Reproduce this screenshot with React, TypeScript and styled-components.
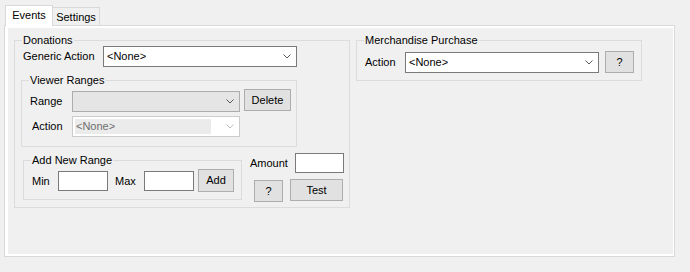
import React from "react";
import styled, { createGlobalStyle } from "styled-components";

const Global = createGlobalStyle`
  html, body { margin: 0; padding: 0; background: #f0f0f0; width: 690px; height: 272px; overflow: hidden; }
  body { font-family: "Liberation Sans", Arial, sans-serif; font-size: 11px; color: #000; }
  * { box-sizing: border-box; }
`;

const Root = styled.div`
  padding: 5px 0 0 4px;
`;

const TabControl = styled.div`
  width: 671px;
  display: flex;
  flex-direction: column;
`;

const TabStrip = styled.div`
  display: flex;
  align-items: flex-end;
  height: 20px;
  padding-left: 1px;
  position: relative;
  z-index: 1;
`;

const Tab = styled.div<{ $active?: boolean }>`
  width: 48px;
  height: ${(p) => (p.$active ? 21 : 18)}px;
  margin-bottom: ${(p) => (p.$active ? -1 : 0)}px;
  margin-left: ${(p) => (p.$active ? 0 : -1)}px;
  border: 1px solid #d9d9d9;
  border-bottom: none;
  background: ${(p) => (p.$active ? "#ffffff" : "#f0f0f0")};
  padding-top: 3px;
  text-align: center;
  line-height: 13px;
  position: relative;
  z-index: ${(p) => (p.$active ? 2 : 1)};
`;

const TabPage = styled.div`
  height: 232px;
  border: 1px solid #d9d9d9;
  background: #ffffff;
  padding: 2px 1px 2px 3px;
`;

const PageBody = styled.div`
  height: 100%;
  background: #f0f0f0;
  display: flex;
  align-items: flex-start;
  gap: 6px;
  padding: 12px 0 0 6px;
`;

const Group = styled.div<{ $w: number; $h: number; $mt?: number; $ml?: number }>`
  position: relative;
  flex-shrink: 0;
  display: flex;
  flex-direction: column;
  width: ${(p) => p.$w}px;
  height: ${(p) => p.$h}px;
  margin-top: ${(p) => p.$mt ?? 0}px;
  margin-left: ${(p) => p.$ml ?? 0}px;
  border: 1px solid #dcdcdc;
`;

const GroupTitle = styled.span`
  position: absolute;
  top: -7px;
  left: 7px;
  padding: 0 1px;
  background: #f0f0f0;
  line-height: 13px;
  white-space: nowrap;
`;

const FieldRow = styled.div<{ $mt?: number; $pl?: number; $center?: boolean }>`
  display: flex;
  align-items: ${(p) => (p.$center ? "center" : "flex-start")};
  margin-top: ${(p) => p.$mt ?? 0}px;
  padding-left: ${(p) => p.$pl ?? 0}px;
`;

const BottomRow = styled.div`
  display: flex;
  align-items: flex-start;
`;

const Column = styled.div<{ $mt: number; $ml: number }>`
  display: flex;
  flex-direction: column;
  margin-top: ${(p) => p.$mt}px;
  margin-left: ${(p) => p.$ml}px;
`;

const Label = styled.span<{ $w: number; $h?: number; $mt?: number; $ml?: number }>`
  flex-shrink: 0;
  width: ${(p) => p.$w}px;
  height: ${(p) => p.$h ?? 21}px;
  line-height: ${(p) => p.$h ?? 21}px;
  margin-top: ${(p) => p.$mt ?? 0}px;
  margin-left: ${(p) => p.$ml ?? 0}px;
  white-space: nowrap;
`;

type ComboKind = "normal" | "list" | "disabled";

const comboBorder: Record<ComboKind, string> = {
  normal: "#7a7a7a",
  list: "#adadad",
  disabled: "#cccccc",
};
const comboBg: Record<ComboKind, string> = {
  normal: "#ffffff",
  list: "#e5e5e5",
  disabled: "#ffffff",
};

const ComboBox = styled.div<{ $w: number; $kind: ComboKind; $mt?: number }>`
  flex-shrink: 0;
  width: ${(p) => p.$w}px;
  height: 21px;
  margin-top: ${(p) => p.$mt ?? 0}px;
  border: 1px solid ${(p) => comboBorder[p.$kind]};
  background: ${(p) => comboBg[p.$kind]};
  display: flex;
  align-items: center;
  padding-right: 5px;
`;

const ComboText = styled.span<{ $disabled?: boolean }>`
  flex: 1;
  align-self: stretch;
  margin: 2px 15px 2px 2px;
  padding-left: ${(p) => (p.$disabled ? 1 : 1)}px;
  line-height: 15px;
  color: ${(p) => (p.$disabled ? "#6d6d6d" : "#000000")};
  background: ${(p) => (p.$disabled ? "#ebebeb" : "transparent")};
  white-space: nowrap;
  overflow: hidden;
`;

const Button = styled.button<{ $w: number; $h?: number; $mt?: number; $ml?: number }>`
  flex-shrink: 0;
  width: ${(p) => p.$w}px;
  height: ${(p) => p.$h ?? 22}px;
  margin: ${(p) => p.$mt ?? 0}px 0 0 ${(p) => p.$ml ?? 0}px;
  padding: 0;
  border: 1px solid #adadad;
  background: #e1e1e1;
  color: #000;
  font: inherit;
  line-height: 13px;
  text-align: center;
`;

const TextBox = styled.input<{ $w: number }>`
  flex-shrink: 0;
  width: ${(p) => p.$w}px;
  height: 20px;
  margin: 0;
  padding: 0 2px;
  border: 1px solid #7a7a7a;
  background: #ffffff;
  font: inherit;
  outline: none;
`;

const Chevron = ({ color }: { color: string }) => (
  <svg width="8" height="5" viewBox="0 0 8 5" style={{ flexShrink: 0 }}>
    <polyline points="0.5,0.5 4,4 7.5,0.5" fill="none" stroke={color} strokeWidth="1" />
  </svg>
);

const Combo = ({
  w,
  kind,
  mt,
  value,
}: {
  w: number;
  kind: ComboKind;
  mt?: number;
  value?: string;
}) => (
  <ComboBox $w={w} $kind={kind} $mt={mt}>
    <ComboText $disabled={kind === "disabled"}>{value}</ComboText>
    <Chevron color={kind === "disabled" ? "#bfbfbf" : "#5a5a5a"} />
  </ComboBox>
);

export default function App() {
  return (
    <>
      <Global />
      <Root>
        <TabControl>
          <TabStrip>
            <Tab $active>Events</Tab>
            <Tab>Settings</Tab>
          </TabStrip>
          <TabPage>
            <PageBody>
              <Group $w={336} $h={168}>
                <GroupTitle>Donations</GroupTitle>
                <FieldRow $mt={5} $pl={8}>
                  <Label $w={80}>Generic Action</Label>
                  <Combo w={194} kind="normal" value="<None>" />
                </FieldRow>

                <Group $w={276} $h={67} $mt={13} $ml={6}>
                  <GroupTitle>Viewer Ranges</GroupTitle>
                  <FieldRow $mt={8} $pl={8}>
                    <Label $w={42} $mt={2}>Range</Label>
                    <Combo w={168} kind="list" mt={2} />
                    <Button $w={47} $h={22} $ml={4}>Delete</Button>
                  </FieldRow>
                  <FieldRow $mt={4} $pl={10}>
                    <Label $w={40}>Action</Label>
                    <Combo w={168} kind="disabled" value="<None>" />
                  </FieldRow>
                </Group>

                <BottomRow>
                  <Group $w={219} $h={40} $mt={13} $ml={8}>
                    <GroupTitle>Add New Range</GroupTitle>
                    <FieldRow $mt={8} $pl={8} $center>
                      <Label $w={26} $h={20}>Min</Label>
                      <TextBox $w={50} />
                      <Label $w={29} $h={20} $ml={7}>Max</Label>
                      <TextBox $w={50} />
                      <Button $w={36} $h={23} $ml={4}>Add</Button>
                    </FieldRow>
                  </Group>
                  <Column $mt={6} $ml={8}>
                    <FieldRow $center>
                      <Label $w={45} $h={20}>Amount</Label>
                      <TextBox $w={49} />
                    </FieldRow>
                    <FieldRow $mt={6} $pl={4}>
                      <Button $w={29} $h={22} $mt={1}>?</Button>
                      <Button $w={53} $h={22} $ml={7}>Test</Button>
                    </FieldRow>
                  </Column>
                </BottomRow>
              </Group>

              <Group $w={286} $h={41}>
                <GroupTitle>Merchandise Purchase</GroupTitle>
                <FieldRow $mt={10} $pl={8}>
                  <Label $w={40} $mt={1}>Action</Label>
                  <Combo w={194} kind="normal" mt={1} value="<None>" />
                  <Button $w={29} $h={22} $ml={6}>?</Button>
                </FieldRow>
              </Group>
            </PageBody>
          </TabPage>
        </TabControl>
      </Root>
    </>
  );
}
